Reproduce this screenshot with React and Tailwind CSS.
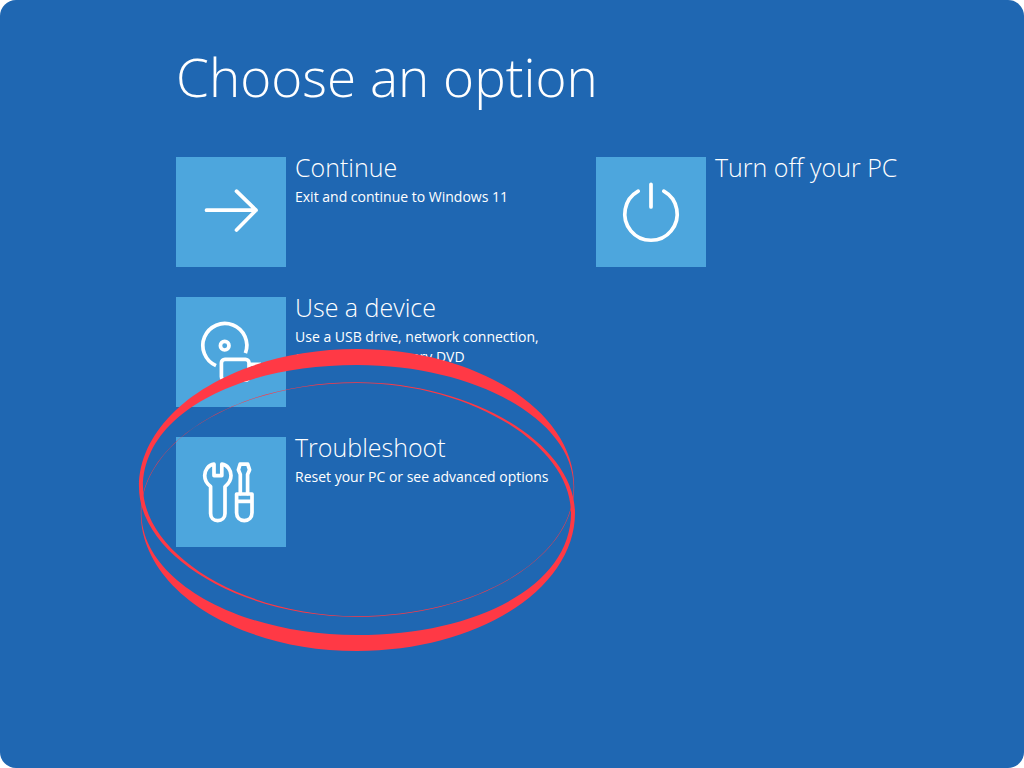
import React from "react";

function Icon({ children }) {
  return (
    <svg
      viewBox="0 0 110 110"
      className="size-full"
      fill="none"
      stroke="white"
      strokeWidth="3.7"
      strokeLinecap="round"
      strokeLinejoin="round"
      aria-hidden="true"
    >
      {children}
    </svg>
  );
}

const ArrowIcon = () => (
  <Icon>
    <path d="M30.5 53.2H80M60.5 34.2L80 53.2L60.5 73" />
  </Icon>
);

const PowerIcon = () => (
  <Icon>
    <path d="M55 27.3V50M42.2 34.2A26.2 26.2 0 1 0 67.8 34.2" />
  </Icon>
);

const DeviceIcon = () => (
  <Icon>
    <g strokeLinecap="butt">
      <path d="M69.4 56.2A22 22 0 1 0 40 68.6" />
      <circle cx="48.7" cy="48.7" r="4.3" />
      <rect x="45.4" y="62.4" width="27.6" height="20.8" rx="3.5" />
      <path d="M74 67.3H83V78H74" strokeLinejoin="miter" />
    </g>
  </Icon>
);

const ToolsIcon = () => (
  <Icon>
    <path d="M38 27.2V38.6H45.8V27.2C51.5 28 55 33 55 38.6C55 43.6 52.4 47 49 49.6V76.5C49 81 45.7 83.6 41.7 83.6C37.7 83.6 34.6 81 34.6 76.5V49.6C31 47 28.7 43.6 28.7 38.6C28.7 33 32.4 28 38 27.2Z" />
    <path d="M64.3 56.6V37.4L62.4 32.8L64.1 27.2H71.7L73.6 32.8L71.6 37.4V56.6" />
    <path d="M60.6 57H76V75.8C76 80.5 72.8 83.6 68.3 83.6C63.8 83.6 60.6 80.5 60.6 75.8ZM60.6 64.3H76" />
  </Icon>
);

function Option({ icon, title, children }) {
  return (
    <button type="button" className="flex h-[110px] w-full items-start gap-[9px] text-left">
      <span className="block size-[110px] shrink-0 bg-[#4da6dd]">{icon}</span>
      <span className="block max-w-64">
        <span className="-mt-1.5 block text-[25px] leading-8 font-light">{title}</span>
        {children && <span className="mt-1 block text-[14px] leading-5">{children}</span>}
      </span>
    </button>
  );
}

function Scribble() {
  return (
    <svg
      viewBox="137 347 440 306"
      className="pointer-events-none absolute -top-[90px] -left-[39px] h-[306px] w-[440px]"
      fill="#ff3945"
      fillRule="evenodd"
      aria-hidden="true"
    >
      <path d="M139 487C139 411 236 349 357 349C477 349 574.2 411 574.2 487C574.2 558.4 476.6 616.8 357 616.8C240 616.8 139 555 139 487ZM143 487C143 415 236 365 357 365C476 365 573.6 420 573.6 487C573.6 558.5 477 616.1 357 616.1C243 616.1 143 554 143 487Z" />
      <path d="M575 513C575 589 478 651 357 651C237 651 140.8 589 140.8 513C140.8 441.6 237.4 382.2 357 382.2C474 382.2 575 445 575 513ZM571 513C571 446 471 382.9 357 382.9C237 382.9 141.4 441.5 141.4 513C141.4 580 238 635 357 635C478 635 571 585 571 513Z" />
    </svg>
  );
}

export default function App() {
  return (
    <div className="bg-white">
      <main className="min-h-screen rounded-2xl bg-[#1f67b2] pt-10 pr-2 pl-44 font-['Open_Sans','Noto_Sans',sans-serif] text-white">
        <h1 className="text-[53px] leading-[74px] font-light">Choose an option</h1>
        <div className="mt-[43px] grid grid-cols-2">
          <ul className="flex flex-col gap-[30px]">
            <li>
              <Option icon={<ArrowIcon />} title="Continue">
                Exit and continue to Windows 11
              </Option>
            </li>
            <li>
              <Option icon={<DeviceIcon />} title="Use a device">
                Use a USB drive, network connection, or Windows recovery DVD
              </Option>
            </li>
            <li className="relative">
              <Option icon={<ToolsIcon />} title="Troubleshoot">
                Reset your PC or see advanced options
              </Option>
              <Scribble />
            </li>
          </ul>
          <ul>
            <li>
              <Option icon={<PowerIcon />} title="Turn off your PC" />
            </li>
          </ul>
        </div>
      </main>
    </div>
  );
}
